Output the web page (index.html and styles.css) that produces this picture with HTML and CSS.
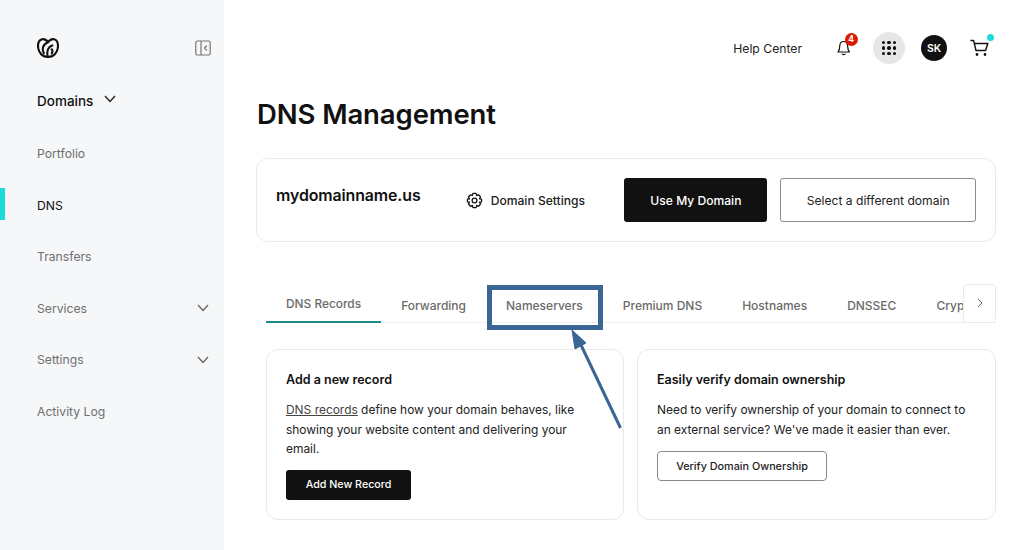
FILE: index.html
```html
<!DOCTYPE html>
<html lang="en">
<head>
<meta charset="utf-8">
<title>DNS Management</title>
<link rel="stylesheet" href="styles.css">
</head>
<body>
<div class="app">
  <aside class="sidebar">
    <div class="side-top">
      <svg class="logo" width="22" height="20" viewBox="0 0 22 20" fill="none" stroke="#111" stroke-width="2.1" stroke-linecap="round" stroke-linejoin="round">
        <path d="M11 18.9C6 19.2 2 15.4 1.2 10.2C.6 5.4 2.2 1.9 5.2 1.2C7.6.7 9.6 2 11 4.2C12.6 2 14.8.7 17 1.2C20 1.9 21.4 5.4 20.8 10.2C20 15.4 16 19.2 11 18.9Z"/>
        <path d="M6.8 15.4C4.6 11.6 5.6 6.2 11 4.2"/>
        <path d="M10.6 18.6C9.6 14 10.6 8.6 15.4 7.4"/>
        <path d="M14.6 11.4C15.8 11.6 15.6 14 14.8 15.6"/>
      </svg>
      <svg class="collapse" width="16" height="16" viewBox="0 0 16 16" fill="none" stroke="#777" stroke-width="1.2">
        <rect x=".8" y="1" width="14.4" height="14" rx="1.5"/>
        <path d="M6 1V15"/>
        <path d="M11.5 6L9.5 8L11.5 10" stroke-linecap="round" stroke-linejoin="round"/>
      </svg>
    </div>
    <div class="side-heading">
      <span>Domains</span>
      <svg width="12" height="8" viewBox="0 0 12 8" fill="none" stroke="#222" stroke-width="1.4"><path d="M1 1L6 6.5L11 1"/></svg>
    </div>
    <nav class="side-nav">
      <a class="side-item">Portfolio</a>
      <a class="side-item active">DNS</a>
      <a class="side-item">Transfers</a>
      <a class="side-item">Services<svg width="12" height="8" viewBox="0 0 12 8" fill="none" stroke="#666" stroke-width="1.3"><path d="M1 1L6 6.5L11 1"/></svg></a>
      <a class="side-item">Settings<svg width="12" height="8" viewBox="0 0 12 8" fill="none" stroke="#666" stroke-width="1.3"><path d="M1 1L6 6.5L11 1"/></svg></a>
      <a class="side-item">Activity Log</a>
    </nav>
  </aside>
  <main class="main">
    <header class="topbar">
      <a class="help">Help Center</a>
      <span class="bell">
        <svg width="18" height="18" viewBox="0 0 18 18" fill="none" stroke="#111" stroke-width="1.2" stroke-linejoin="round"><path d="M3 13C4.300 11.600 4.700 10 4.700 7.500C4.700 4.600 6.200 2.500 8.700 2.500C11.200 2.500 12.700 4.600 12.700 7.500C12.700 10 13.100 11.600 14.400 13Z"/><path d="M7 14.600C7.400 16 10 16 10.400 14.600"/></svg>
        <span class="badge">4</span>
      </span>
      <span class="apps">
        <span class="dots"><i></i><i></i><i></i><i></i><i></i><i></i><i></i><i></i><i></i></span>
      </span>
      <span class="avatar">SK</span>
      <span class="cart">
        <svg width="20" height="18" viewBox="0 0 20 18" fill="none" stroke="#111" stroke-width="1.4" stroke-linecap="round" stroke-linejoin="round"><path d="M1 1.500H3.600L6 11.500H15.600L17.800 4.500H4.400"/><circle cx="7" cy="15.500" r=".7" fill="#111"/><circle cx="15" cy="15.500" r=".7" fill="#111"/></svg>
        <span class="cart-dot"></span>
      </span>
    </header>
    <h1 class="title">DNS Management</h1>
    <section class="domain-card">
      <div class="domain-name">mydomainname.us</div>
      <a class="settings">
        <svg width="17" height="17" viewBox="0 0 24 24" fill="none" stroke="#111" stroke-width="1.8" stroke-linejoin="round"><circle cx="12" cy="12" r="3.4"/><path d="M9.800 2H14.200L15 5L17.600 3.900L20.600 7L19 9.600L22 10.200V13.800L19 14.400L20.600 17L17.600 20.100L15 19L14.200 22H9.800L9 19L6.400 20.100L3.400 17L5 14.400L2 13.800V10.200L5 9.600L3.400 7L6.400 3.900L9 5Z"/></svg>
        <span>Domain Settings</span>
      </a>
      <a class="btn btn-dark use">Use My Domain</a>
      <a class="btn btn-light select">Select a different domain</a>
    </section>
    <div class="tabs">
      <a class="tab active">DNS Records</a>
      <a class="tab">Forwarding</a>
      <a class="tab">Nameservers</a>
      <a class="tab">Premium DNS</a>
      <a class="tab">Hostnames</a>
      <a class="tab">DNSSEC</a>
      <a class="tab">Crypto</a>
      <span class="tab-next"><svg width="6" height="10" viewBox="0 0 6 10" fill="none" stroke="#666" stroke-width="1"><path d="M1 1L5 5L1 9"/></svg></span>
    </div>
    <div class="cards">
      <section class="card card-left">
        <h2>Add a new record</h2>
        <p><a class="link">DNS records</a> define how your domain behaves, like showing your website content and delivering your email.</p>
        <a class="btn btn-dark add">Add New Record</a>
      </section>
      <section class="card card-right">
        <h2>Easily verify domain ownership</h2>
        <p>Need to verify ownership of your domain to connect to an external service? We've made it easier than ever.</p>
        <a class="btn btn-light verify">Verify Domain Ownership</a>
      </section>
    </div>
  </main>
</div>
<svg class="annotation" width="1024" height="550" viewBox="0 0 1024 550" fill="none">
  <rect x="489.500" y="287.500" width="111" height="40" stroke="#3a6595" stroke-width="5"/>
  <path d="M620.500 428L581 345" stroke="#3a6595" stroke-width="3"/>
  <path d="M572 330L586 343L575 349Z" fill="#3a6595" stroke="#3a6595" stroke-width="1"/>
</svg>
</body>
</html>
```
FILE: styles.css
```css
* { box-sizing: border-box; }
html, body { margin: 0; height: 100%; overflow: hidden; background: #fff; }
body { font-family: Inter, "Liberation Sans", sans-serif; color: #111; position: relative; }
a { color: inherit; text-decoration: none; }
.app { display: flex; width: 1024px; height: 550px; }

.sidebar { width: 224px; flex: none; background: #f5f7f8; padding: 37px 13px 0 0; }
.side-top { display: flex; justify-content: space-between; align-items: center; padding-left: 37px; height: 21px; }
.collapse { margin-top: 1px; }
.side-heading { display: flex; align-items: center; gap: 11px; margin: 33px 0 0 37px; height: 20px; font-size: 13.5px; font-weight: 500; color: #111; }
.side-heading svg { margin-top: -4px; }
.side-nav { display: flex; flex-direction: column; margin-top: 17px; }
.side-item { position: relative; display: flex; align-items: center; justify-content: space-between; height: 51.5px; padding-left: 37px; padding-right: 2px; font-size: 12.2px; color: #6f6f6f; }
.side-item.active { color: #111; }
.side-item.active::before { content: ""; position: absolute; left: 0; top: 8px; width: 5px; height: 32px; background: #1bdbdb; }

.main { flex: 1; min-width: 0; padding: 0 28px 0 33px; }
.topbar { display: flex; align-items: center; justify-content: flex-end; height: 32px; margin-top: 32px; }
.help { font-size: 12.2px; color: #222; margin-right: 33px; }
.bell { position: relative; display: flex; margin-right: 20px; }
.badge { position: absolute; left: 9.5px; top: -6.5px; width: 13px; height: 13px; border-radius: 50%; background: #db1802; color: #fff; font-size: 8.5px; font-weight: 700; text-align: center; line-height: 13px; }
.apps { width: 32px; height: 32px; border-radius: 50%; background: #e6e6e6; display: flex; align-items: center; justify-content: center; margin-right: 16px; }
.dots { display: grid; grid-template-columns: repeat(3, 3.5px); gap: 2.2px; }
.dots i { width: 3.5px; height: 3.5px; border-radius: 50%; background: #111; }
.avatar { width: 26px; height: 26px; border-radius: 50%; background: #111; color: #fff; font-size: 10.5px; font-weight: 600; display: flex; align-items: center; justify-content: center; margin-right: 23px; }
.cart { position: relative; display: flex; margin-right: 6px; }
.cart-dot { position: absolute; right: -3.5px; top: -5.5px; width: 7px; height: 7px; border-radius: 50%; background: #1bdbdb; }

.title { margin: 32px 0 0; font-size: 27.5px; line-height: 36px; font-weight: 600; letter-spacing: -.1px; color: #111; }

.domain-card { display: flex; align-items: center; height: 84px; margin-top: 26px; margin-left: -1px; padding: 0 19px 0 19px; border: 1px solid #e8eaeb; border-radius: 12px; }
.domain-name { font-size: 15.9px; font-weight: 600; margin-top: -10px; width: 190px; letter-spacing: -.1px; }
.settings { display: flex; align-items: center; gap: 8px; font-size: 12.1px; font-weight: 500; color: #222; width: 159px; }
.btn { display: flex; align-items: center; justify-content: center; font-size: 12.1px; border-radius: 3px; }
.btn-dark { background: #111; color: #fff; font-weight: 500; }
.btn-light { background: #fff; color: #222; border: 1px solid #8a8a8a; }
.use { width: 143px; height: 44px; margin-right: 13px; }
.select { width: 196px; height: 44px; }

.tabs { position: relative; display: flex; height: 39px; margin: 42px 0 0 9px; box-shadow: inset 0 -1px 0 #eef0f1; overflow: hidden; }
.tab { flex: none; padding: 0 20px; font-size: 12px; font-weight: 500; color: #6b6b6b; line-height: 43px; }
.tab.active { font-size: 11.9px; line-height: 40px; height: 39px; border-bottom: 2px solid #1b8a8a; }
.tab-next { position: absolute; right: 0; top: 0; width: 33px; height: 39px; display: flex; align-items: center; justify-content: center; background: #fff; border: 1px solid #e8eaeb; border-radius: 4px; padding-bottom: 2px; }

.cards { display: flex; gap: 13px; margin: 26px 0 0 9px; }
.card { height: 171px; padding: 20px 19px; border: 1px solid #e8eaeb; border-radius: 12px; }
.card-left { width: 358px; flex: none; }
.card-left p { max-width: 300px; }
.card-right { flex: 1; }
.card h2 { margin: 0; font-size: 12.5px; line-height: 19px; font-weight: 600; color: #111; }
.card p { margin: 11px 0 0; font-size: 11.95px; line-height: 19.5px; color: #222; }
.link { text-decoration: underline; color: #444; }
.add { width: 125px; height: 30px; margin-top: 11px; font-size: 10.7px; }
.verify { width: 170px; height: 30px; margin-top: 12px; font-size: 10.8px; font-weight: 500; border-radius: 4px; }

.annotation { position: absolute; left: 0; top: 0; pointer-events: none; }
```
